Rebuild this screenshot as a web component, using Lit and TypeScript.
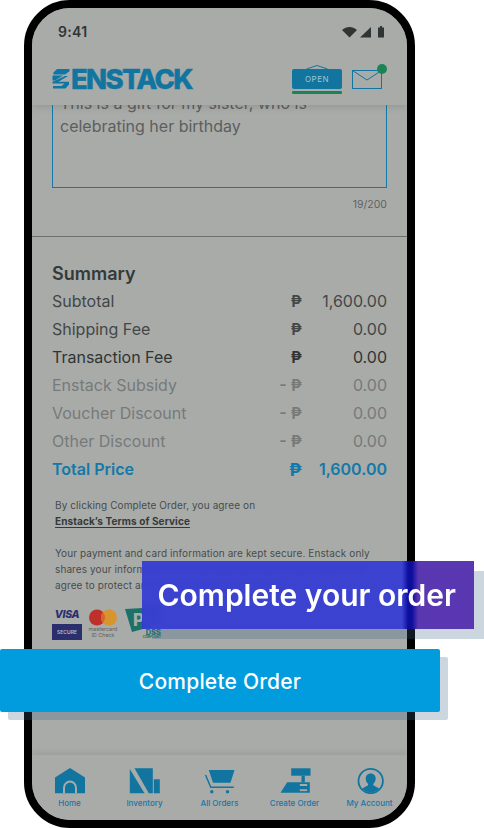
import { LitElement, html, css, svg } from "lit";
import { customElement } from "lit/decorators.js";

const rows = [
  { label: "Subtotal", sign: "", value: "1,600.00", kind: "" },
  { label: "Shipping Fee", sign: "", value: "0.00", kind: "" },
  { label: "Transaction Fee", sign: "", value: "0.00", kind: "dark" },
  { label: "Enstack Subsidy", sign: "- ", value: "0.00", kind: "muted" },
  { label: "Voucher Discount", sign: "- ", value: "0.00", kind: "muted" },
  { label: "Other Discount", sign: "- ", value: "0.00", kind: "muted" },
  { label: "Total Price", sign: "", value: "1,600.00", kind: "total" },
];

const navIcons = {
  home: svg`<path d="M16 1 L31 10.5 V26.3 H1 V10.5 Z" fill="currentColor"/><path d="M10 26.3 V21 A6 6.5 0 0 1 22 21 V26.3" fill="none" stroke="#a9aba9" stroke-width="2"/>`,
  inv: svg`<path d="M0.8 2 V26.3 H15.5 Z" fill="currentColor"/><path d="M5.5 1.3 H23.8 V26.3 H19.8 Z" fill="currentColor"/><rect x="24.8" y="12.3" width="6" height="14" fill="currentColor"/>`,
  cart: svg`<path d="M4.8 3 H30.5 L26.5 15.7 H9 Z" fill="currentColor"/><path d="M1.5 8 L6.8 20.3 H29.8" fill="none" stroke="currentColor" stroke-width="1.5"/><circle cx="7.8" cy="24.7" r="1.7" fill="currentColor"/><circle cx="23.5" cy="24.7" r="1.7" fill="currentColor"/>`,
  reg: svg`<rect x="12.2" y="1.3" width="19.3" height="7.4" fill="currentColor"/><rect x="22.5" y="8.7" width="3.3" height="6.6" fill="currentColor"/><path d="M1.5 25.7 L8.2 15.3 H30.8 V25.7 Z" fill="currentColor"/><rect x="20.8" y="17" width="7.4" height="2" fill="#a9aba9"/><rect x="20.8" y="22.3" width="7.4" height="1.8" fill="#a9aba9"/>`,
  acc: svg`<circle cx="16.7" cy="14" r="12.2" fill="none" stroke="currentColor" stroke-width="1.8"/><path d="M16.7 6.5 C20.1 6.5 21.7 9 21.7 11.6 C21.7 14 20.5 16 19.3 17 V18.2 L25.2 21.4 C23.1 24 20.1 25.2 16.7 25.2 C13.3 25.2 10.3 24 8.2 21.4 L14.1 18.2 V17 C12.9 16 11.7 14 11.7 11.6 C11.7 9 13.3 6.5 16.7 6.5 Z" fill="currentColor"/>`,
};

const navItems = [
  { icon: navIcons.home, label: "Home" },
  { icon: navIcons.inv, label: "Inventory" },
  { icon: navIcons.cart, label: "All Orders" },
  { icon: navIcons.reg, label: "Create Order" },
  { icon: navIcons.acc, label: "My Account" },
];

@customElement("app-root")
export class AppRoot extends LitElement {
  static styles = css`
    :host {
      display: block;
      position: relative;
      width: 484px;
      height: 828px;
      overflow: hidden;
      background: #fff;
      font-family: Inter, "Liberation Sans", sans-serif;
    }
    .phone {
      box-sizing: border-box;
      width: 391px;
      height: 828px;
      margin-left: 24px;
      border: 8px solid #000;
      border-radius: 46px;
      overflow: hidden;
      background: #a9aba9;
      display: flex;
      flex-direction: column;
    }
    .top {
      position: relative;
      z-index: 2;
      background: #a9aba9;
      box-shadow: 0 2px 7px rgba(0, 0, 0, 0.12);
      height: 97px;
      flex: none;
      display: flex;
      flex-direction: column;
    }
    .status {
      height: 44px;
      padding: 0 22px 0 26px;
      display: flex;
      align-items: center;
      justify-content: space-between;
      box-sizing: border-box;
    }
    .time {
      font-size: 14px;
      font-weight: 600;
      color: #2f3534;
      letter-spacing: 0.3px;
      padding-top: 2px;
    }
    .status svg { display: block; margin-top: 2px; }
    .brand {
      flex: 1;
      display: flex;
      align-items: flex-start;
      padding: 14px 25px 0 20px;
    }
    .logo { display: flex; align-items: center; color: #0f75a5; }
    .logo svg { display: block; margin-right: 1px; }
    .word {
      font-size: 27.5px;
      font-weight: 800;
      line-height: 26px;
      letter-spacing: -1.7px;
      color: #11759f;
      -webkit-text-stroke: 0.4px #11759f;
    }
    .actions { margin: -1px 0 0 auto; display: flex; gap: 10px; align-items: flex-start; }
    .open { width: 50px; }
    .open svg { display: block; margin-left: 14px; }
    .sign {
      height: 20px;
      background: #11759f;
      border-radius: 2px;
      color: #a5c3d2;
      font-size: 8px;
      font-weight: 400;
      letter-spacing: 0.5px;
      display: flex;
      align-items: center;
      justify-content: center;
    }
    .bar { height: 3px; border-radius: 1px; background: #1b8457; margin-top: 2px; }
    .mail { position: relative; width: 30px; height: 19px; margin-top: 5px; }
    .mail svg { display: block; }
    .dot {
      position: absolute;
      right: -5px;
      top: -6px;
      width: 10px;
      height: 10px;
      border-radius: 50%;
      background: #1b8457;
    }
    .scroll { flex: 1; min-height: 0; overflow: hidden; }
    .content { margin-top: -17px; }
    .field { padding: 0 20px; }
    .box {
      box-sizing: border-box;
      height: 100px;
      border: 1px solid #1279a8;
      padding: 3px 7px;
      font-size: 16px;
      line-height: 23px;
      color: #5b5f5f;
    }
    .count {
      margin-top: 10px;
      text-align: right;
      font-size: 10.5px;
      line-height: 13px;
      color: #5f6363;
    }
    .rule { height: 1px; background: #6d706f; margin-top: 25px; }
    .summary { padding: 26px 20px 0; }
    .summary h2 {
      margin: 0;
      font-size: 18px;
      line-height: 22px;
      font-weight: 600;
      color: #343a3a;
    }
    .row {
      display: flex;
      align-items: center;
      height: 28px;
      font-size: 16px;
      color: #424747;
    }
    .rows { margin-top: 2px; }
    .row.dark { color: #2f3534; }
    .row.muted { color: #767a7a; }
    .row.total { color: #1279a8; font-weight: 600; }
    .row .label { flex: 1; }
    .row .cur { width: 50px; white-space: pre; text-align: right; font-weight: 600; }
    .row.total .cur { font-size: 18px; font-weight: 700; }
    .row .val { width: 85px; text-align: right; }
    .terms {
      margin: 14px 3px 0;
      font-size: 10px;
      letter-spacing: 0.1px;
      line-height: 16px;
      color: #474c4c;
    }
    .terms b {
      font-weight: 700;
      color: #343a3a;
      text-decoration: underline;
      text-underline-offset: 2px;
    }
    .terms p { margin: 0 0 16px; }
    .badges { display: flex; align-items: flex-start; margin: 11px 0 0 0; gap: 6px; }
    .visa { width: 30px; text-align: center; }
    .visa i {
      display: block;
      font-size: 10.5px;
      line-height: 12px;
      font-weight: 800;
      color: #2b2f6b;
      letter-spacing: -0.3px;
    }
    .visa span {
      display: block;
      margin-top: 3px;
      height: 16px;
      line-height: 16px;
      background: #2b2f6b;
      color: #b9bcc9;
      font-size: 5px;
      font-weight: 600;
    }
    .mc { width: 30px; text-align: center; }
    .mc svg { display: block; margin: 0 auto; }
    .mc small {
      display: block;
      font-size: 5.4px;
      line-height: 6px;
      color: #5d6160;
      white-space: nowrap;
    }
    .pci { width: 36px; margin-left: 1px; }
    .pci svg { display: block; overflow: visible; }
    .dss {
      margin-top: -4px;
      font-size: 7.5px;
      line-height: 7px;
      font-weight: 800;
      color: #1c7268;
      text-align: right;
    }
    .dss small {
      display: block;
      font-size: 3px;
      line-height: 3px;
      font-weight: 700;
    }
    nav {
      position: relative;
      z-index: 2;
      flex: none;
      height: 65px;
      background: #a9aba9;
      box-shadow: 0 -2px 7px rgba(0, 0, 0, 0.09);
      display: grid;
      grid-template-columns: repeat(5, 1fr);
      box-sizing: border-box;
      padding-top: 12px;
      color: #11759f;
    }
    .tab { display: flex; flex-direction: column; align-items: center; }
    .tab svg { display: block; }
    .tab span {
      margin-top: 3px;
      font-size: 8px;
      line-height: 12px;
      font-weight: 500;
      color: #1a76a5;
      white-space: nowrap;
    }
    .callout {
      position: absolute;
      left: 142px;
      top: 561px;
      width: 332px;
      height: 68px;
      box-sizing: border-box;
      padding-left: 15.5px;
      display: flex;
      align-items: center;
      color: #fff;
      font-size: 30px;
      font-weight: 600;
      white-space: nowrap;
      backdrop-filter: blur(3px);
      background: linear-gradient(
        to right,
        rgba(52, 60, 210, 0.94) 0,
        rgba(52, 60, 210, 0.94) 260px,
        rgba(12, 12, 165, 0.94) 266px,
        rgba(12, 12, 165, 0.94) 270px,
        rgba(80, 43, 173, 0.94) 276px,
        rgba(80, 43, 173, 0.94) 100%
      );
      box-shadow: 10px 10px 0 rgba(54, 96, 130, 0.26);
    }
    .cta {
      position: absolute;
      left: 0;
      top: 649px;
      width: 440px;
      height: 63px;
      box-sizing: border-box;
      padding-top: 2px;
      display: flex;
      align-items: center;
      justify-content: center;
      background: #019cde;
      border-radius: 2px;
      color: #fff;
      font-size: 21px;
      font-weight: 500;
      letter-spacing: 0.2px;
      box-shadow: 8px 8px 0 rgba(54, 96, 130, 0.26);
    }
  `;

  render() {
    return html`
      <div class="phone">
        <div class="top">
          <div class="status">
            <span class="time">9:41</span>
            <svg width="46" height="14" viewBox="0 0 46 14">
              <path d="M3 6 C7.5 2 13.5 2 18 6 L10.5 13.5 Z" fill="#2f3534"/>
              <path d="M21 13.5 L32 3 V13.5 Z" fill="#2f3534"/>
              <path d="M39 3.5 H41 V2 H43 V3.5 H45 V13.5 H39 Z" fill="#2f3534"/>
            </svg>
          </div>
          <div class="brand">
            <div class="logo">
              <svg width="18" height="22" viewBox="0 0 18 22">
                <path d="M5 1 H17.5 V3.2 L13 6.4 H1.5 V4.6 Z" fill="currentColor"/>
                <path d="M0.5 7.6 H11 L3 12.6 H0.5 Z" fill="currentColor"/>
                <path d="M0.5 13.8 L13 8 H16 L6.5 13.8 H17 V16.6 L13.5 20.4 H1 V18 H9.5 L12.5 15.4 H0.5 Z" fill="currentColor"/>
              </svg>
              <span class="word">ENSTACK</span>
            </div>
            <div class="actions">
              <div class="open">
                <svg width="22" height="4" viewBox="0 0 22 4"><path d="M0.5 4 L11 0.5 L21.5 4" fill="none" stroke="#11759f" stroke-width="1"/></svg>
                <div class="sign">OPEN</div>
                <div class="bar"></div>
              </div>
              <div class="mail">
                <svg width="30" height="19" viewBox="0 0 30 19"><rect x="0.5" y="0.5" width="29" height="18" fill="none" stroke="#11759f"/><path d="M0.5 0.5 L15 10 L29.5 0.5" fill="none" stroke="#11759f"/></svg>
                <span class="dot"></span>
              </div>
            </div>
          </div>
        </div>
        <div class="scroll">
          <div class="content">
            <div class="field">
              <div class="box">This is a gift for my sister, who is celebrating her birthday</div>
              <div class="count">19/200</div>
            </div>
            <div class="rule"></div>
            <div class="summary">
              <h2>Summary</h2>
              <div class="rows">
                ${rows.map(
                  (r) => html`<div class="row ${r.kind}">
                    <span class="label">${r.label}</span>
                    <span class="cur">${r.sign}₱</span>
                    <span class="val">${r.value}</span>
                  </div>`
                )}
              </div>
              <div class="terms">
                <p>By clicking Complete Order, you agree on<br /><b>Enstack’s Terms of Service</b></p>
                <p>Your payment and card information are kept secure. Enstack only shares your information with our payment service providers who agree to protect and use it for this purpose only.</p>
              </div>
              <div class="badges">
                <div class="visa"><i>VISA</i><span>SECURE</span></div>
                <div class="mc">
                  <svg width="28" height="17" viewBox="0 0 28 17"><circle cx="8" cy="8.5" r="8" fill="#c0302b"/><circle cx="20" cy="8.5" r="8" fill="#d8952e"/><path d="M14 3.2 A8 8 0 0 1 14 13.8 A8 8 0 0 1 14 3.2 Z" fill="#d5652b"/></svg>
                  <small>mastercard</small>
                  <small>ID Check</small>
                </div>
                <div class="pci">
                  <svg width="36" height="24" viewBox="0 0 36 24"><path d="M0 0 L36 -2 L36 15 L7 23 Z" fill="#1c7268"/><text x="8" y="17" font-size="17" font-weight="800" fill="#a9aba9" font-family="Inter">PCI</text></svg>
                  <div class="dss">DSS<small>COMPLIANT</small></div>
                </div>
              </div>
            </div>
          </div>
        </div>
        <nav>
          ${navItems.map(
            (n) => html`<div class="tab">
              <svg width="32" height="27" viewBox="0 0 32 27">${n.icon}</svg>
              <span>${n.label}</span>
            </div>`
          )}
        </nav>
      </div>
      <div class="callout">Complete your order</div>
      <div class="cta">Complete Order</div>
    `;
  }
}
